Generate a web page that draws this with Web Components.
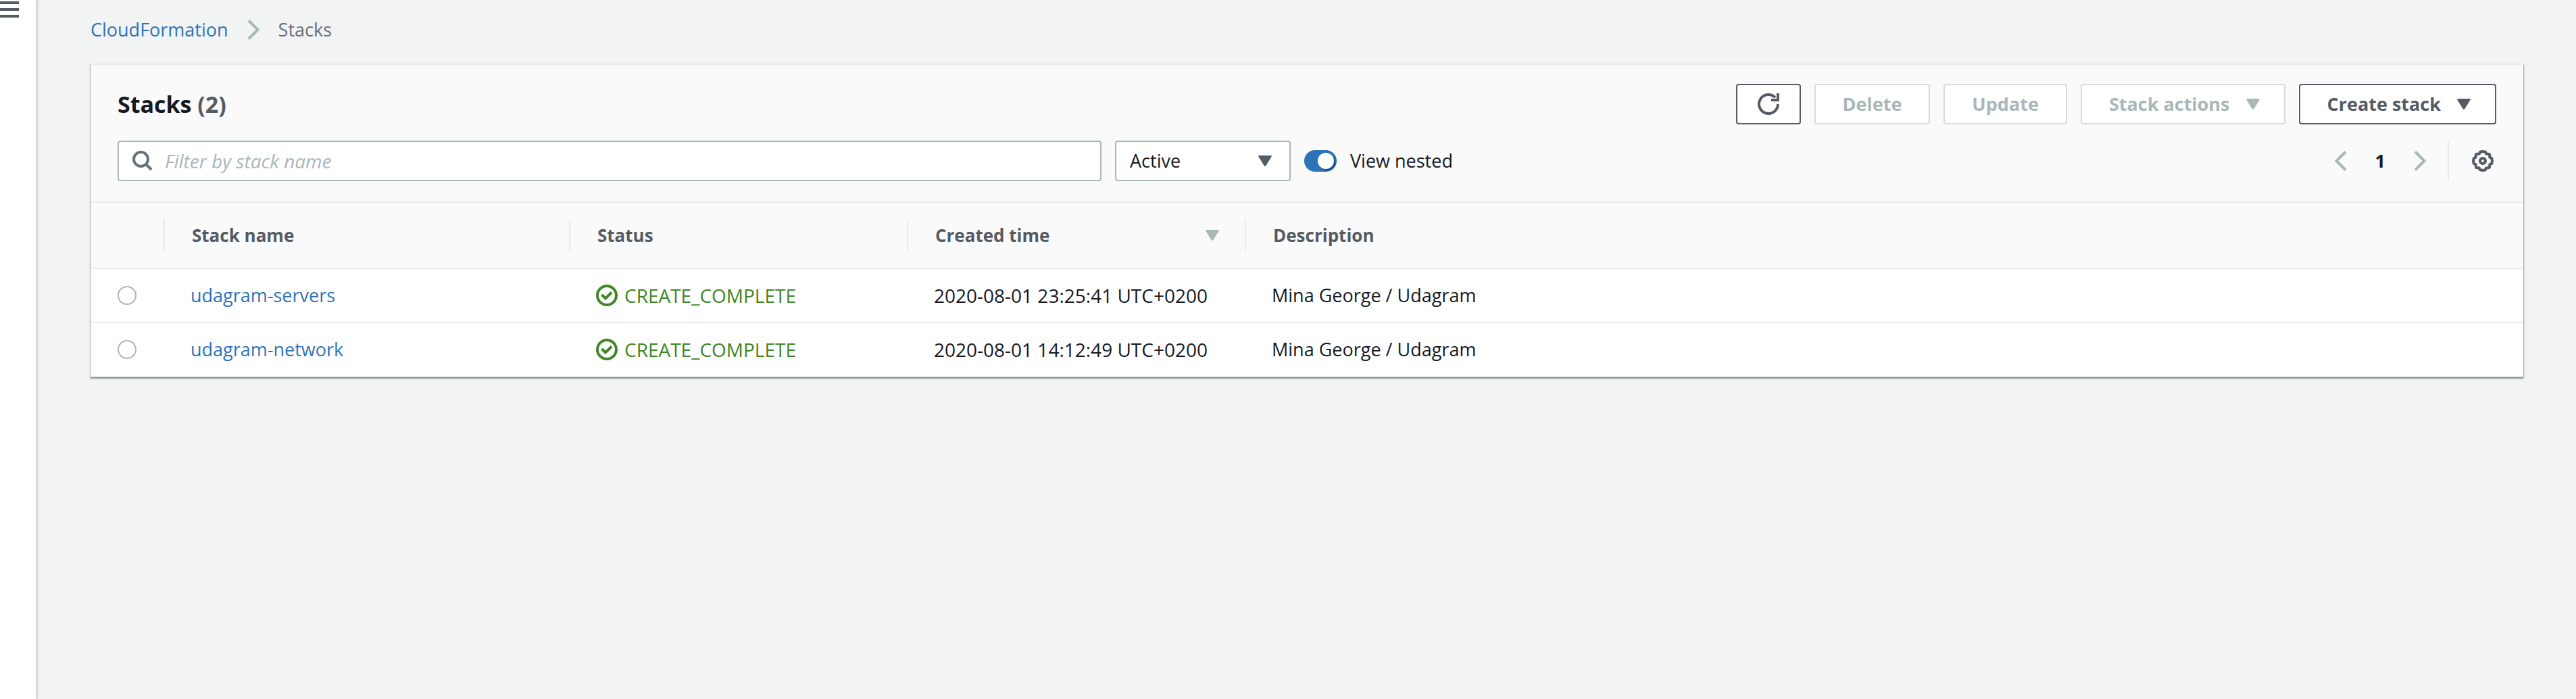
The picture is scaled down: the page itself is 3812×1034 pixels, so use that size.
<!DOCTYPE html>
<html lang="en">
<head>
<meta charset="utf-8">
<title>CloudFormation - Stacks</title>
<style>
  html, body { margin: 0; height: 100%; }
  body {
    background: #f2f3f3;
    color: #16191f;
    font: 27px/44px "Open Sans", "Noto Sans", sans-serif;
    --link: #2e73b8;
    --muted: #687078;
    --faint: #aab7b8;
    --line-neutral: #eaeaea;
    --green: #3f8624;
  }
</style>
</head>
<body>
<console-shell>
  <nav-rail slot="rail"></nav-rail>
  <bread-crumbs slot="crumbs" parent="CloudFormation" current="Stacks"></bread-crumbs>
  <stacks-panel>
    <stacks-table></stacks-table>
  </stacks-panel>
</console-shell>

<script>
const define = (name, markup, setup) => {
  const template = document.createElement('template');
  template.innerHTML = markup;
  customElements.define(name, class extends HTMLElement {
    constructor() {
      super();
      this.attachShadow({ mode: 'open' }).append(template.content.cloneNode(true));
    }
    connectedCallback() { if (setup) setup(this, this.shadowRoot); }
  });
};

/* Icons share one element; the glyph is picked by its name. */
const glyphs = {
  caret: ['0 0 20 16', '<path d="M1.500 0H18.500Q20.500 0 19.600 1.800L11.600 14.800Q10 17 8.400 14.800L.4 1.800Q-.5 0 1.500 0Z" fill="currentColor"/>'],
  next: ['0 0 18 30', '<path d="M2 1.500L15.500 15L2 28.500" stroke-width="4"/>'],
  prev: ['0 0 18 30', '<path d="M16 1.500L2.500 15L16 28.500" stroke-width="4"/>'],
  search: ['0 0 30 30', '<circle cx="12.500" cy="12.500" r="10.500" stroke-width="4"/><path d="M19.500 19.500L28 28" stroke-width="4"/>'],
  refresh: ['0 0 32 32', '<path d="M30 16A14 14 0 1 1 26 6.200" stroke-width="4"/><path d="M30 0V10H20" stroke-width="4"/>'],
  check: ['0 0 32 32', '<circle cx="16" cy="16" r="14" stroke-width="4"/><path d="M8.500 15L14 20.500L23 11.500" stroke-width="4"/>'],
  menu: ['0 0 28 24', '<path d="M0 2H28M0 12H28M0 22H28" stroke-width="4"/>'],
  gear: ['0 0 32 32', '<path d="M16 2L20 2.800L21.200 5.600L25.900 6.100L26.400 10.800L29.200 12L30 16L29.200 20L26.400 21.200L25.900 25.900L21.200 26.400L20 29.200L16 30L12 29.200L10.800 26.400L6.100 25.900L5.600 21.200L2.800 20L2 16L2.800 12L5.600 10.800L6.100 6.100L10.800 5.600L12 2.800Z" stroke-width="4" stroke-linejoin="round"/><circle cx="16" cy="16" r="4" stroke-width="4"/>']
};
define('ui-icon', `
  <style>:host{display:block;flex:none} svg{display:block;fill:none;stroke:currentColor} .caret{stroke:none}</style>
  <svg aria-hidden="true"></svg>`,
  (host, root) => {
    const [box, shape] = glyphs[host.getAttribute('name')];
    const svg = root.querySelector('svg');
    const [, , w, h] = box.split(' ');
    svg.setAttribute('viewBox', box);
    svg.setAttribute('width', w);
    svg.setAttribute('height', h);
    svg.setAttribute('class', host.getAttribute('name'));
    svg.innerHTML = shape;
  });

define('console-shell', `
  <style>
    :host{display:flex;min-height:100vh}
    main{flex:1;min-width:0;padding:22px 78px 0}
    ::slotted(bread-crumbs){margin-bottom:28px}
  </style>
  <slot name="rail"></slot>
  <main><slot name="crumbs"></slot><slot></slot></main>`);

define('nav-rail', `
  <style>
    :host{display:block;flex:none;box-sizing:border-box;width:54px;margin-right:2px;background:#fff;box-shadow:1px 0 1px #aab7b8,2px 0 2px #d5dbdb}
    button{display:block;border:0;margin:0;padding:2px 0 0;background:none;color:#545b64}
  </style>
  <button aria-label="Open navigation"><ui-icon name="menu"></ui-icon></button>`);

define('bread-crumbs', `
  <style>
    :host{display:block}
    nav{display:flex;align-items:center;gap:28px}
    a{color:var(--link);text-decoration:none}
    span{color:var(--muted)}
    ui-icon{color:var(--faint)}
  </style>
  <nav aria-label="Breadcrumbs"><a href="#"></a><ui-icon name="next"></ui-icon><span aria-current="page"></span></nav>`,
  (host, root) => {
    root.querySelector('a').textContent = host.getAttribute('parent');
    root.querySelector('span').textContent = host.getAttribute('current');
  });

define('action-button', `
  <style>
    :host{display:block}
    button{display:flex;align-items:center;gap:24px;box-sizing:border-box;height:60px;margin:0;padding:0 40px;border:2px solid #545b64;border-radius:4px;background:#fff;color:#545b64;font:inherit;font-weight:700}
    button:disabled{border-color:#d5dbdb;color:#aab7b8}
    :host([icon-only]) button{padding:0 30px}
    :host([menu]) button{padding-right:36px}
  </style>
  <button><slot></slot></button>`,
  (host, root) => {
    const button = root.querySelector('button');
    button.disabled = host.hasAttribute('inactive');
    if (host.hasAttribute('hint')) button.setAttribute('aria-label', host.getAttribute('hint'));
    if (host.hasAttribute('menu')) {
      const caret = document.createElement('ui-icon');
      caret.setAttribute('name', 'caret');
      button.append(caret);
    }
  });

define('search-field', `
  <style>
    :host{display:block}
    label{display:flex;align-items:center;gap:18px;box-sizing:border-box;height:60px;padding:0 20px;border:2px solid #aab7b8;border-radius:4px;background:#fff;color:#687078}
    input{flex:1;min-width:0;border:0;padding:0;outline:0;background:none;font:inherit;font-size:28px;color:#16191f}
    input::placeholder{color:#aab7b8;font-style:italic;opacity:1}
  </style>
  <label><ui-icon name="search"></ui-icon><input type="text" placeholder="Filter by stack name" aria-label="Filter by stack name"></label>`);

define('status-select', `
  <style>
    :host{display:grid;align-items:center;width:260px}
    select,ui-icon{grid-area:1/1}
    select{appearance:none;box-sizing:border-box;width:100%;height:60px;margin:0;padding:0 20px;border:2px solid #aab7b8;border-radius:4px;background:#fff;color:#16191f;font:inherit}
    ui-icon{justify-self:end;margin-right:28px;color:#545b64;pointer-events:none}
  </style>
  <select aria-label="Stack status"><option>Active</option></select><ui-icon name="caret"></ui-icon>`);

define('toggle-switch', `
  <style>
    :host{display:block}
    label{display:flex;align-items:center;gap:20px}
    input{appearance:none;display:flex;justify-content:flex-end;box-sizing:border-box;width:48px;height:32px;margin:0;padding:4px;border-radius:16px;background:#2e73b8}
    input::before{content:"";width:24px;height:24px;border-radius:50%;background:#fff;box-shadow:2px 2px 2px rgba(0,28,60,.45)}
    input:not(:checked){justify-content:flex-start;background:#687078}
  </style>
  <label><input type="checkbox" role="switch" checked><span><slot></slot></span></label>`);

define('page-picker', `
  <style>
    :host{display:flex;align-items:center}
    button{display:block;margin:0;padding:0;border:0;background:none;color:#545b64;font:inherit}
    button:disabled{color:#aab7b8}
    nav{display:flex;align-items:center;gap:42px}
    nav .page{color:#16191f;font-weight:700}
    .settings{display:flex;align-items:center;height:60px;margin-left:32px;padding:0 4px 0 34px;border-left:2px solid #eaeded}
  </style>
  <nav aria-label="Pages">
    <button disabled aria-label="Previous page"><ui-icon name="prev"></ui-icon></button>
    <button class="page">1</button>
    <button disabled aria-label="Next page"><ui-icon name="next"></ui-icon></button>
  </nav>
  <div class="settings"><button aria-label="Preferences"><ui-icon name="gear"></ui-icon></button></div>`);

define('stacks-panel', `
  <style>
    :host{display:block;background:#fff;border-top:2px solid #eaeded;box-shadow:0 2px 2px #879196,1px 1px 2px #aab7b8,-1px 1px 1px #c3c9cb}
    header{display:flex;flex-direction:column;gap:24px;padding:28px 40px 30px;background:#fafafa;border-bottom:2px solid var(--line-neutral)}
    .row{display:flex;align-items:center;justify-content:space-between}
    .group{display:flex;align-items:center;gap:20px}
    h1{margin:0;font-size:34px;line-height:44px;font-weight:700}
    h1 span{color:#545b64}
    .filters{flex:0 1 2000px}
    search-field{flex:0 1 1456px}
  </style>
  <header>
    <div class="row">
      <h1>Stacks <span>(2)</span></h1>
      <div class="group">
        <action-button icon-only hint="Refresh"><ui-icon name="refresh"></ui-icon></action-button>
        <action-button inactive>Delete</action-button>
        <action-button inactive>Update</action-button>
        <action-button inactive menu>Stack actions</action-button>
        <action-button menu>Create stack</action-button>
      </div>
    </div>
    <div class="row">
      <div class="group filters">
        <search-field></search-field>
        <status-select></status-select>
        <toggle-switch>View nested</toggle-switch>
      </div>
      <page-picker></page-picker>
    </div>
  </header>
  <slot></slot>`);

define('stack-status', `
  <style>:host{display:flex;align-items:center;gap:10px;color:var(--green)}</style>
  <ui-icon name="check"></ui-icon><span><slot></slot></span>`);

const stacks = [
  ['udagram-servers', 'CREATE_COMPLETE', '2020-08-01 23:25:41 UTC+0200', 'Mina George / Udagram'],
  ['udagram-network', 'CREATE_COMPLETE', '2020-08-01 14:12:49 UTC+0200', 'Mina George / Udagram']
];
define('stacks-table', `
  <style>
    :host{display:block}
    table{width:100%;border-collapse:separate;border-spacing:0;table-layout:fixed}
    .pick{width:110px}.name{width:600px}.mid{width:500px}
    th{height:96px;padding:0;background:#fafafa;border-bottom:2px solid var(--line-neutral);color:#545b64;font-size:26px;font-weight:700;text-align:left}
    th div{display:flex;align-items:center;justify-content:space-between;height:48px;padding:0 38px 0 40px;border-right:2px solid var(--line-neutral)}
    th:last-child div{border:0}
    th button{display:flex;flex:1;align-items:center;justify-content:space-between;margin:0;padding:0;border:0;background:none;color:inherit;font:inherit}
    th ui-icon{color:#aab7b8}
    td{height:78px;padding:0 38px;border-bottom:2px solid var(--line-neutral)}
    td:first-child{padding:0 40px}
    .data{font-size:28px}
    input{appearance:none;display:block;box-sizing:border-box;width:28px;height:28px;margin:0;border:2px solid #aab7b8;border-radius:50%;background:#fff}
    input:checked{border:8px solid #2e73b8}
    a{color:var(--link);text-decoration:none}
  </style>
  <table>
    <colgroup><col class="pick"><col class="name"><col class="mid"><col class="mid"><col></colgroup>
    <thead><tr>
      <th><div></div></th>
      <th scope="col"><div>Stack name</div></th>
      <th scope="col"><div>Status</div></th>
      <th scope="col" aria-sort="descending"><div><button>Created time<ui-icon name="caret"></ui-icon></button></div></th>
      <th scope="col"><div>Description</div></th>
    </tr></thead>
    <tbody></tbody>
  </table>`,
  (host, root) => {
    root.querySelector('tbody').innerHTML = stacks.map(([name, status, time, text]) => `
      <tr>
        <td><input type="radio" name="stack" aria-labelledby="${name}"></td>
        <td><a href="#" id="${name}">${name}</a></td>
        <td class="data"><stack-status>${status}</stack-status></td>
        <td class="data">${time}</td>
        <td>${text}</td>
      </tr>`).join('');
  });
</script>
</body>
</html>
